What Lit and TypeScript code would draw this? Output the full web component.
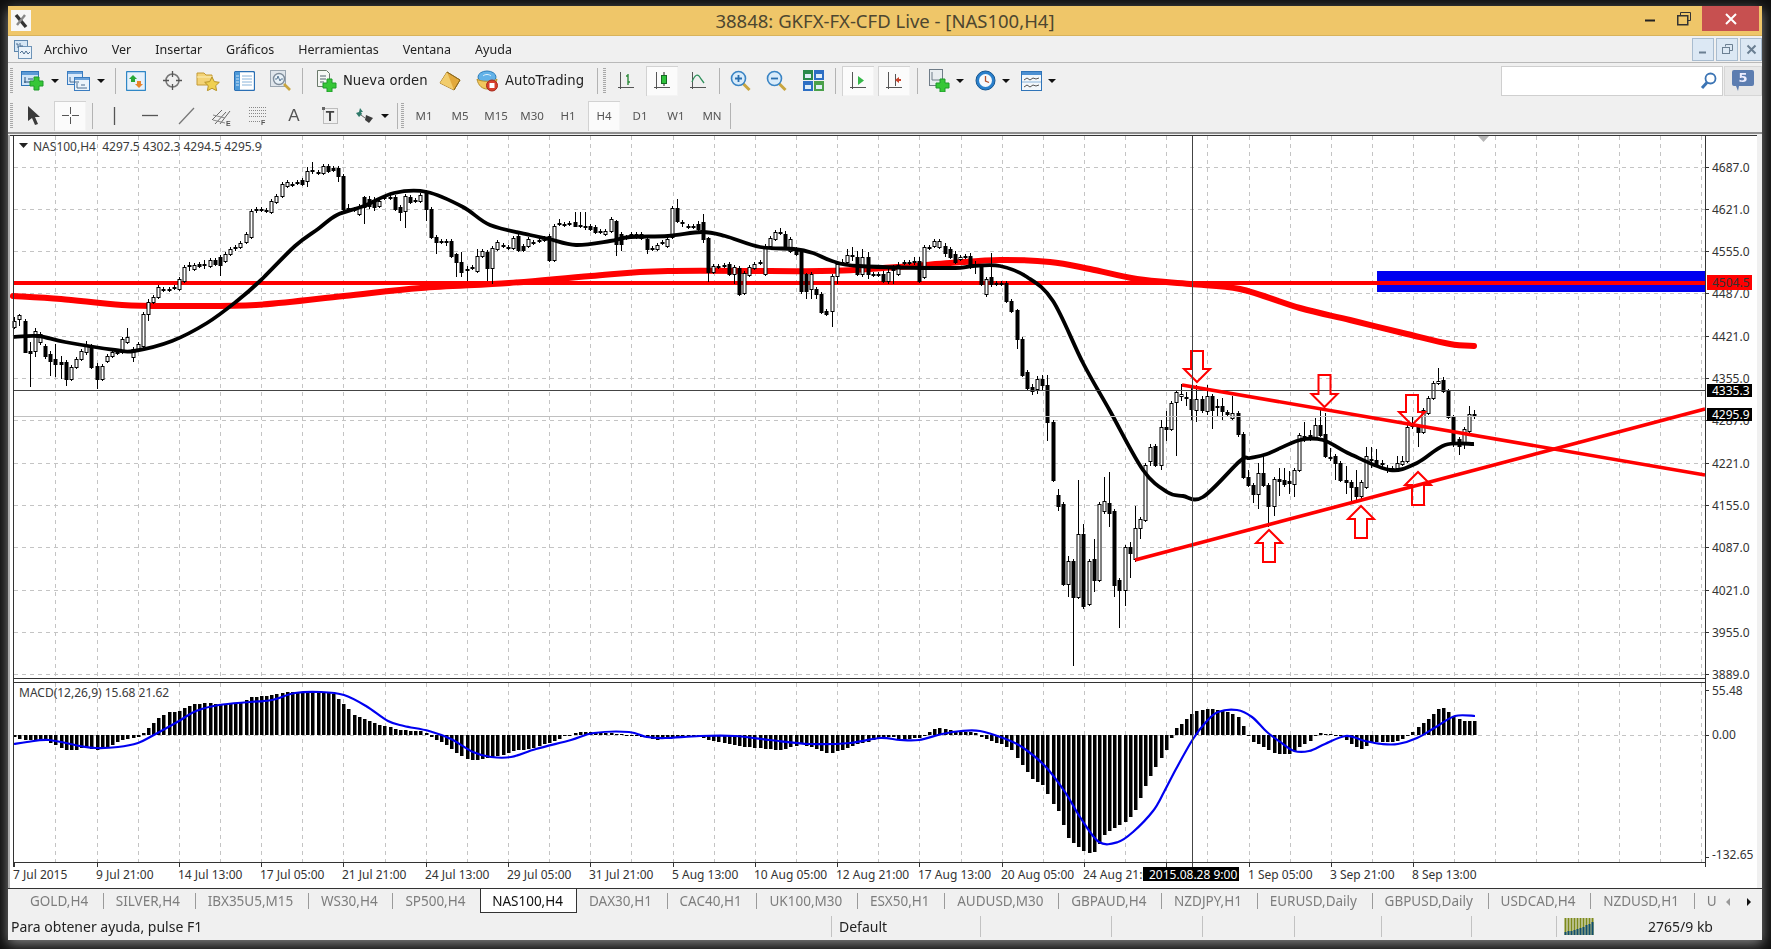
import {html, svg, css, LitElement} from 'lit';
import {customElement} from 'lit/decorators.js';

// pixel positions on the chart are page coordinates, the svg viewBox starts at the window corner
const barX = (i: number) => Math.round(14.3 + 5.14 * i) + 0.5;

// top, bottom, up, wick top, wick bottom
const BARS: number[][] = [
  [322,328,1,318,330],[316,320,1,315,327],[322,353,0,320,354],[352,354,0,343,388],[332,352,1,329,358],[335,343,1,333,346],[347,357,0,345,360],[355,362,0,352,377],[360,365,0,345,378],[363,365,0,357,380],
  [363,380,0,361,387],[368,380,1],[360,368,1],[352,360,1],[347,353,1,342,356],[347,368,0,345,370],[367,380,0,364,390],[367,380,1],[357,362,1],[353,357,1],
  [352,354,0],[340,353,1],[338,343,1,329,345],[350,358,1,348,363],[345,350,1],[315,347,1],[303,315,1,300,322],[298,303,1],[288,298,1],[290,291,0],
  [290,291,0],[288,289,0],[280,290,1],[268,282,1],[266,267,0,263,272],[266,270,1],[265,267,0],[265,266,0,261,270],[261,267,1],[261,265,0],
  [258,266,0,256,277],[255,262,1],[250,255,1],[248,249,0,246,252],[244,248,1],[235,243,1],[212,238,1],[210,211,0,208,214],[210,211,0],[211,212,0],
  [202,213,1],[197,203,1],[185,197,1],[183,187,1],[185,186,0],[183,184,0],[181,185,0],[172,182,1,168,188],[171,172,0,163,175],[173,174,0],
  [167,174,1],[167,172,0],[169,171,0],[169,177,0,167,183],[177,210,0],[209,210,0,205,212],[210,211,0],[208,215,1,205,217],[198,208,0,197,225],[200,207,0,197,210],
  [202,208,0,198,212],[202,207,1],[198,199,0],[198,199,0],[198,210,0,196,212],[208,213,0,206,222],[197,212,1,195,229],[198,203,0],[201,202,0],[196,202,1],
  [193,210,0,191,222],[210,238,0],[238,243,0,236,255],[242,243,0],[242,243,0,240,247],[242,257,0],[255,263,0,254,278],[263,273,0,253,278],[270,271,0,267,282],[268,269,0],
  [257,272,1,250,274],[252,257,1],[253,269,0,251,282],[249,269,1,247,285],[243,250,1],[246,247,0],[248,249,0],[239,249,1],[237,251,0],[247,251,0],
  [240,247,1],[243,244,0],[241,242,0],[239,241,1],[237,261,0],[227,261,1,225,263],[224,225,0,220,227],[225,226,0],[224,225,0],[223,227,0,213,228],
  [226,227,0,213,229],[227,228,0,213,231],[227,230,0],[228,233,0],[232,233,0],[232,235,1],[220,232,1],[222,245,0,221,257],[235,245,0,233,252],[238,239,0],
  [235,238,1],[235,236,0,233,240],[235,239,0],[240,250,0,238,255],[249,250,0],[246,250,1],[243,244,0],[240,247,1],[209,238,1],[209,222,0,200,224],
  [223,224,0,221,228],[227,228,0],[227,228,0],[225,230,0,222,232],[223,240,0,215,244],[239,273,0,238,283],[267,273,1],[267,268,0],[266,267,0],[265,275,0],
  [268,275,1,266,285],[269,295,0,267,297],[274,294,1],[268,276,1],[265,269,1],[263,264,0],[247,275,1],[239,247,1],[233,240,1],[233,234,0,229,236],
  [235,248,0,232,250],[240,252,1],[250,255,0],[253,292,0,252,295],[275,292,0,274,300],[275,290,1,273,300],[290,295,0,288,300],[295,313,0],[312,315,0],[277,312,1,275,328],
  [265,277,1,263,285],[263,264,0,260,266],[256,263,1,250,265],[256,257,0,248,262],[258,275,0,252,277],[258,275,1,250,278],[258,275,0,253,280],[275,276,0],[275,276,0],[275,282,0,272,284],
  [273,282,1,270,285],[270,271,0,266,285],[266,275,1,263,277],[263,264,0],[263,264,0],[262,263,0,258,266],[262,282,0,258,284],[248,278,1],[248,249,0],[242,247,1],
  [242,248,1],[247,254,0,244,258],[250,258,0],[255,263,0,252,265],[258,260,1],[257,258,0],[257,268,0,254,270],[266,267,0,262,275],[267,285,0],[280,295,1,278,298],
  [278,285,0,254,288],[284,285,0],[284,285,0],[284,302,0],[302,312,0],[311,340,0,310,350],[340,376,0],[373,389,0],[388,392,0,385,396],[380,390,1,377,395],
  [380,386,0,376,392],[386,423,0,376,442],[423,481,0],[496,507,0,490,512],[505,585,0],[562,585,1,557,598],[562,598,0,560,667],[535,598,1,481,600],[535,607,0,525,610],[562,605,1],
  [560,581,0,540,593],[505,581,1],[502,512,1,478,515],[504,514,0,473,528],[512,586,0,510,598],[581,591,0,579,629],[548,591,1,546,607],[548,554,0,543,579],[529,560,1,507,563],[520,529,1,518,540],
  [466,521,1],[448,462,1,445,467],[447,466,0],[428,466,1,421,471],[428,430,0,412,442],[404,430,1],[393,403,1,391,457],[395,397,1,385,402],[398,399,0,393,407],[400,410,0,386,421],
  [400,411,1,386,423],[400,411,0,397,414],[397,412,1,386,416],[397,411,0,395,430],[407,408,0,400,418],[407,412,0,399,421],[413,415,0],[414,419,1,397,421],[414,435,0,412,438],[435,478,0],
  [478,486,0,471,488],[486,495,0,484,504],[474,495,1,464,510],[474,486,0,457,488],[486,507,0,484,528],[480,507,1,478,517],[480,482,0,469,497],[481,485,0,469,488],[482,484,0,472,495],[471,485,1,469,498],
  [436,471,1],[437,438,0,423,443],[436,437,0,431,442],[426,438,1,419,440],[426,436,0,411,438],[435,457,0,414,459],[458,459,0,449,462],[457,464,0,455,481],[464,481,0],[481,483,0,467,495],
  [483,488,0,481,505],[488,497,0,471,502],[483,497,1,481,502],[457,488,1,448,490],[460,461,0,448,469],[461,466,0,450,468],[464,465,0,461,468],[469,470,0,466,474],[469,470,0],[464,469,1,457,471],
  [462,465,1,457,467],[428,462,1],[426,427,0,417,430],[428,433,0,426,448],[411,433,1,409,435],[399,414,1,397,416],[384,399,1],[382,384,1,369,386],[381,392,0,378,394],[392,418,0],
  [418,442,0,416,448],[440,447,0,438,456],[430,443,1,428,450],[415,432,1,407,434],[415,417,0,411,420],
];

const MA_BLACK = '13,338 38,337 65,343 115,351 134,352 172,342 207,324 237,302 260,282 295,247 318,230 337,216 364,207 394,194 427,193 463,208 490,226 530,236 549,240 576,246 610,242 630,238 668,237 702,233 725,237 760,248 794,250 813,254 832,262 859,267 950,269 973,267 1000,267 1027,278 1053,302 1083,364 1110,412 1143,471 1167,493 1183,497 1203,498 1240,462 1250,459 1267,455 1300,441 1323,441 1350,455 1390,471 1417,464 1445,446 1474,445';
const MA_RED = '13,297 61,300 122,306 176,307 256,306 344,297 421,289 509,284 591,277 668,272 821,272 897,268 950,264 1000,261 1050,263 1090,270 1137,280 1190,285 1240,290 1300,309 1350,321 1407,335 1450,345 1474,347';
const SIGNAL = '14,745 27,743 49,741 80,747 96,749 118,748 138,744 152,737 179,722 196,712 219,706 250,703 272,701 295,694 321,693 344,696 366,707 388,722 404,727 429,732 451,740 473,753 491,758 511,758 536,750 571,741 594,734 629,733 647,738 665,739 700,737 735,737 770,741 810,745 850,744 880,739 900,741 919,741 942,735 961,732 980,732 1003,739 1022,748 1045,767 1065,793 1080,818 1099,843 1118,843 1133,833 1153,812 1164,793 1176,770 1193,740 1206,723 1218,713 1237,711 1252,718 1267,733 1283,745 1294,752 1309,752 1325,745 1346,737 1365,742 1382,745 1398,745 1417,739 1436,728 1455,717 1475,717';

// histogram end points, x then y
const HIST: [number, number][] = [[14,738],[22,741],[33,741],[45,742],[58,747],[67,751],[76,751],[85,748],[96,751],[107,749],[118,743],[129,739],[138,738],[143,734],[152,725],[158,719],[170,713],[179,712],[188,707],[196,705],[210,704],[219,706],[228,705],[241,704],[252,698],[268,697],[286,693],[304,693],[321,693],[333,695],[344,705],[353,715],[362,719],[371,723],[379,726],[388,727],[397,730],[411,732],[424,732],[431,738],[442,743],[455,753],[467,760],[478,761],[487,759],[500,757],[514,752],[527,750],[540,747],[554,742],[563,738],[571,735],[580,733],[598,733],[612,734],[629,736],[643,738],[656,741],[665,740],[679,738],[696,737],[712,742],[745,748],[780,751],[802,745],[830,755],[858,745],[892,737],[900,741],[911,740],[923,738],[934,730],[942,729],[954,732],[973,733],[982,738],[992,742],[1003,746],[1013,752],[1022,765],[1032,780],[1042,785],[1051,802],[1059,813],[1068,838],[1078,848],[1087,854],[1095,853],[1105,835],[1114,829],[1126,823],[1135,812],[1145,788],[1154,770],[1162,758],[1168,749],[1172,738],[1177,728],[1185,722],[1193,713],[1202,711],[1210,709],[1220,712],[1229,713],[1239,718],[1246,732],[1252,742],[1262,747],[1271,753],[1281,755],[1290,755],[1300,748],[1310,742],[1319,734],[1331,735],[1340,737],[1352,745],[1361,750],[1369,745],[1378,743],[1390,743],[1401,741],[1409,735],[1419,728],[1428,720],[1438,710],[1445,709],[1453,717],[1463,722],[1476,722]];

const histY = (x: number) => {
  for (let k = 1; k < HIST.length; k++) {
    if (x <= HIST[k][0]) {
      const [x0, y0] = HIST[k - 1];
      const [x1, y1] = HIST[k];
      return y0 + ((y1 - y0) * (x - x0)) / (x1 - x0);
    }
  }
  return HIST[HIST.length - 1][1];
};

// catmull-rom through the traced points so the averages do not look polygonal
const smooth = (points: string) => {
  const p = points.split(' ').map(s => s.split(',').map(Number));
  let d = `M${p[0][0]} ${p[0][1]}`;
  for (let i = 0; i < p.length - 1; i++) {
    const a = p[i - 1] ?? p[i];
    const b = p[i];
    const c = p[i + 1];
    const e = p[i + 2] ?? c;
    d += `C${b[0] + (c[0] - a[0]) / 6} ${b[1] + (c[1] - a[1]) / 6} ${c[0] - (e[0] - b[0]) / 6} ${c[1] - (e[1] - b[1]) / 6} ${c[0]} ${c[1]}`;
  }
  return d;
};

const PRICES = ['4687.0','4621.0','4555.0','4487.0','4421.0','4355.0','4287.0','4221.0','4155.0','4087.0','4021.0','3955.0','3889.0'];
const TIMES = ['7 Jul 2015','9 Jul 21:00','14 Jul 13:00','17 Jul 05:00','21 Jul 21:00','24 Jul 13:00','29 Jul 05:00','31 Jul 21:00','5 Aug 13:00','10 Aug 05:00','12 Aug 21:00','17 Aug 13:00','20 Aug 05:00','24 Aug 21:00','','1 Sep 05:00','3 Sep 21:00','8 Sep 13:00'];
const TABS = ['GOLD,H4','SILVER,H4','IBX35U5,M15','WS30,H4','SP500,H4','NAS100,H4','DAX30,H1','CAC40,H1','UK100,M30','ESX50,H1','AUDUSD,M30','GBPAUD,H4','NZDJPY,H1','EURUSD,Daily','GBPUSD,Daily','USDCAD,H4','NZDUSD,H1','U'];
const MENU = ['Archivo','Ver','Insertar','Gráficos','Herramientas','Ventana','Ayuda'];
const PERIODS = ['M1','M5','M15','M30','H1','H4','D1','W1','MN'];

const I = {
  logo: html`<svg width="20" height="21" viewBox="0 0 20 21"><rect width="20" height="21" fill="#f7f7f7"/><path d="M5 5l10 12" stroke="#333" stroke-width="3.4"/><path d="M14 5L6 15" stroke="#888" stroke-width="2.4"/></svg>`,
  mdi: html`<svg width="18" height="19" viewBox="0 0 18 19"><rect x=".5" y=".5" width="13" height="11" fill="#d5e6f5" stroke="#5f87ad"/><rect x="4.5" y="6.5" width="13" height="12" fill="#e9f2fa" stroke="#6e94b8"/><path d="M2 4h2v4M6 3v3h3M6 13l2-2 2 3 2-3 2 3 2-2" fill="none" stroke="#4a6d90"/></svg>`,
  newChart: html`<svg width="24" height="21" viewBox="0 0 24 21"><rect x=".5" y="1.5" width="17" height="14" fill="#cfe4f7" stroke="#2f74b8"/><rect x="1" y="2" width="16" height="3" fill="#5c9ad6"/><path d="M4 7v6M3 12h11M7 9h5" stroke="#27507c" fill="none"/><path d="M13 7h5v4h4v5h-4v4h-5v-4H9v-5h4z" fill="#36c736" stroke="#1f9a2a"/></svg>`,
  profiles: html`<svg width="24" height="20" viewBox="0 0 24 20"><rect x=".5" y=".5" width="15" height="13" fill="#dbeafa" stroke="#3a7cc0"/><rect x="1" y="1" width="14" height="2" fill="#6ba2da"/><rect x="7.5" y="6.5" width="15" height="13" fill="#eaf3fb" stroke="#3a7cc0"/><rect x="8" y="7" width="14" height="2" fill="#6ba2da"/><path d="M3 6v5h9M10 12v5h10M14 14h4" stroke="#4a6d90" fill="none"/></svg>`,
  market: html`<svg width="20" height="20" viewBox="0 0 20 20"><rect x=".5" y=".5" width="19" height="19" rx="1" fill="#e6f1fb" stroke="#2f87c6" stroke-width="1.4"/><path d="M6 3l4 4H8v3H4V7H2z" transform="translate(1 1)" fill="#27a838"/><path d="M11 10h4v3h2l-4 4-4-4h2z" fill="#e8842c"/></svg>`,
  target: html`<svg width="21" height="21" viewBox="0 0 21 21" fill="none" stroke="#777"><circle cx="10.5" cy="10.5" r="6.5" stroke-width="1.6"/><path d="M10.5 1v6M10.5 14v6M1 10.5h6M14 10.5h6" stroke="#555" stroke-width="1.3"/></svg>`,
  favorites: html`<svg width="24" height="21" viewBox="0 0 24 21"><path d="M1 3h7l2 2h6v10H1z" fill="#f3d377" stroke="#c49a34"/><path d="M1 7h15" stroke="#fbeeb8"/><path d="M16 7l2.3 4.6 5 .7-3.6 3.4.9 5-4.6-2.4-4.6 2.4.9-5-3.6-3.4 5-.7z" fill="#f0d050" stroke="#b79328"/></svg>`,
  navigator: html`<svg width="21" height="20" viewBox="0 0 21 20"><rect x=".5" y=".5" width="20" height="19" rx="1.5" fill="#fff" stroke="#2a6fb4" stroke-width="1.3"/><rect x="1" y="1" width="5" height="18" fill="#4e9ad8"/><path d="M8 5h10M8 8h10M8 11h10M8 14h10" stroke="#8ab4da"/><path d="M2 5h3M2 8h3M2 11h3M2 14h3" stroke="#cfe4f7"/></svg>`,
  tester: html`<svg width="23" height="22" viewBox="0 0 23 22"><rect x="1.5" y=".5" width="15" height="16" fill="#dfe5eb" stroke="#9aa5b0"/><circle cx="10" cy="9" r="5.5" fill="#e8f1f8" stroke="#7e8c9a" stroke-width="1.4"/><path d="M6 9h2l1-3 2 5 1-2h2" stroke="#5c7a96" fill="none"/><path d="M15 14l6 6" stroke="#c9a53f" stroke-width="2.6"/></svg>`,
  order: html`<svg width="21" height="22" viewBox="0 0 21 22"><path d="M1.5.5h9l3 3v13h-12z" fill="#f6f8f5" stroke="#6b7a6b"/><path d="M4 6h6M4 9h6M4 12h4" stroke="#50606a"/><path d="M11 9h5v4h4v5h-4v4h-5v-4H7v-5h4z" fill="#36c736" stroke="#1f9a2a"/></svg>`,
  gold: html`<svg width="22" height="20" viewBox="0 0 22 20"><path d="M8 1l13 8-6 10L1 12z" fill="#e2a93c" stroke="#9b7021"/><path d="M8 1l7 18L1 12z" fill="#f2cd6d"/><path d="M8 1l13 8-6 10" fill="none" stroke="#8d6a1c"/></svg>`,
  auto: html`<svg width="23" height="22" viewBox="0 0 23 22"><ellipse cx="11" cy="7" rx="9" ry="6" fill="#62b2e8" stroke="#2a7bb8"/><path d="M1 9c1 7 6 10 10 10s9-3 10-10c-3 3-17 3-20 0z" fill="#f2c75d" stroke="#b48e2c"/><path d="M7 6c2-2 6-2 8 0" stroke="#dff1fc" fill="none"/><circle cx="16" cy="15.5" r="5.5" fill="#d8402c" stroke="#a52a1c"/><rect x="13.5" y="13" width="5" height="5" fill="#fff"/></svg>`,
  bars: html`<svg width="18" height="19" viewBox="0 0 18 19" fill="none"><path d="M3.5 1v17M1 16.5h16" stroke="#555"/><path d="M11 3v11M9 5h2M11 11h2" stroke="#2c8a3a" stroke-width="1.4"/></svg>`,
  candles: html`<svg width="18" height="19" viewBox="0 0 18 19" fill="none"><path d="M3.5 1v17M1 16.5h16" stroke="#555"/><path d="M11 1v14" stroke="#222"/><rect x="8.5" y="4.5" width="5" height="8" fill="#2ec23c" stroke="#166b22"/></svg>`,
  line: html`<svg width="18" height="19" viewBox="0 0 18 19" fill="none"><path d="M3.5 1v17M1 16.5h16" stroke="#555"/><path d="M3 11c3-8 6-9 9-3l3 4" stroke="#2d8f5a" stroke-width="1.3"/></svg>`,
  zoomIn: html`<svg width="22" height="22" viewBox="0 0 22 22"><path d="M12.5 13l7 7" stroke="#c9a53f" stroke-width="3"/><circle cx="8.5" cy="8.5" r="7" fill="#d8ebfa" stroke="#3a84c4" stroke-width="1.6"/><path d="M5 8.5h7M8.5 5v7" stroke="#2b6fae" stroke-width="1.8"/></svg>`,
  zoomOut: html`<svg width="22" height="22" viewBox="0 0 22 22"><path d="M12.5 13l7 7" stroke="#c9a53f" stroke-width="3"/><circle cx="8.5" cy="8.5" r="7" fill="#d8ebfa" stroke="#3a84c4" stroke-width="1.6"/><path d="M5 8.5h7" stroke="#2b6fae" stroke-width="1.8"/></svg>`,
  tile: html`<svg width="21" height="21" viewBox="0 0 21 21"><rect width="10" height="10" fill="#2a8a4a"/><rect x="11" width="10" height="10" fill="#2d6fc4"/><rect y="11" width="10" height="10" fill="#2d6fc4"/><rect x="11" y="11" width="10" height="10" fill="#4aa04a"/><path d="M2 4h6v4H2zM13 4h6v4h-6zM2 15h6v4H2zM13 15h6v4h-6z" fill="#dfeef8"/></svg>`,
  scroll: html`<svg width="18" height="19" viewBox="0 0 18 19" fill="none"><path d="M3.5 1v17M1 16.5h16" stroke="#555"/><path d="M9 5l6 4.5L9 14z" fill="#36b84a"/></svg>`,
  shift: html`<svg width="18" height="19" viewBox="0 0 18 19" fill="none"><path d="M3.5 1v17M1 16.5h16M10.5 3v12" stroke="#555"/><path d="M10 9l4-3v2h2v2h-2v2z" fill="#c8432c"/></svg>`,
  indicator: html`<svg width="21" height="23" viewBox="0 0 21 23"><rect x=".5" y=".5" width="13" height="16" fill="#e9edf0" stroke="#6f7c88"/><path d="M3 3v8h8" stroke="#6f7c88" fill="none"/><path d="M11 10h5v4h4v5h-4v4h-5v-4H7v-5h4z" fill="#36c736" stroke="#1f9a2a"/></svg>`,
  clock: html`<svg width="21" height="21" viewBox="0 0 21 21"><circle cx="10.5" cy="10.5" r="9.5" fill="#2a80cc" stroke="#14548e"/><circle cx="10.5" cy="10.5" r="6.5" fill="#f6f9fc"/><path d="M10.5 6v5l3.5 1.5" stroke="#b5502a" fill="none" stroke-width="1.3"/></svg>`,
  template: html`<svg width="21" height="20" viewBox="0 0 21 20"><rect x=".5" y=".5" width="20" height="19" fill="#f2f7fb" stroke="#2f74b8"/><rect x="1" y="1" width="19" height="3" fill="#4c90d2"/><path d="M1 11h19" stroke="#8ab4da"/><path d="M3 9l3-2 3 2 3-2 3 1 3-1M3 16l3-2 3 2 3-2 3 1 3-1" stroke="#555" fill="none"/></svg>`,
  cursor: html`<svg width="14" height="19" viewBox="0 0 14 19"><path d="M1 0l12 11H8l3 7-3 1-3-7-4 3z" fill="#3a3a3a"/></svg>`,
  cross: html`<svg width="19" height="19" viewBox="0 0 19 19"><path d="M9.5 1v7M9.5 11v7M1 9.5h7M11 9.5h7" stroke="#555"/></svg>`,
  vline: html`<svg width="3" height="18" viewBox="0 0 3 18"><path d="M1.5 0v18" stroke="#555" stroke-width="1.3"/></svg>`,
  hline: html`<svg width="16" height="3" viewBox="0 0 16 3"><path d="M0 1.5h16" stroke="#555" stroke-width="1.3"/></svg>`,
  trend: html`<svg width="17" height="18" viewBox="0 0 17 18"><path d="M1 17L16 1" stroke="#777" stroke-width="1.2"/></svg>`,
  channel: html`<svg width="22" height="20" viewBox="0 0 22 20" fill="none"><path d="M1 14L11 4M4 18L15 6M9 18L19 5" stroke="#666"/><path d="M2 9l12 3M2 14l12 3" stroke="#888"/><text x="15" y="20" font-size="7" font-weight="700" fill="#555" font-family="Liberation Sans, sans-serif">E</text></svg>`,
  fibo: html`<svg width="18" height="19" viewBox="0 0 18 19" fill="none"><path d="M0 1.5h17M0 4.5h17M0 7.5h17M0 10.5h17M0 15.5h12" stroke="#888" stroke-dasharray="1 1"/><text x="12" y="19" font-size="7" font-weight="700" fill="#555" font-family="Liberation Sans, sans-serif">F</text></svg>`,
  label: html`<svg width="17" height="18" viewBox="0 0 17 18" fill="none"><rect x="1.5" y="1.5" width="14" height="15" stroke="#888" stroke-dasharray="1 1"/><rect x="0" y="0" width="3" height="3" fill="#666"/></svg>`,
  arrows: html`<svg width="20" height="18" viewBox="0 0 20 18"><path d="M5 1l3 4H6l1 2-3 3-3-4 3-1z" fill="#2f7a6a"/><path d="M11 8l7 3-4 5-4-3z" fill="#3c3c3c"/><path d="M6 8l4 3" stroke="#666"/></svg>`,
  lens: html`<svg width="17" height="18" viewBox="0 0 17 18"><circle cx="10.5" cy="6.5" r="5" fill="#fff" stroke="#3b74b4" stroke-width="1.8"/><path d="M7 10.5L2 16" stroke="#3b74b4" stroke-width="3"/></svg>`,
  five: html`<svg width="22" height="22" viewBox="0 0 22 22"><path d="M2 0h18a2 2 0 0 1 2 2v12a2 2 0 0 1-2 2H7l-1 5-2-5H2a2 2 0 0 1-2-2V2a2 2 0 0 1 2-2z" fill="#5c7db0"/></svg>`,
  conn: html`<svg width="31" height="17" viewBox="0 0 31 17"><path d="M1.5 0v17M4.5 0v17M7.5 0v17M10.5 0v17M13.5 0v17M16.5 0v17M19.5 0v17M22.5 0v17M25.5 0v17M28.5 0v17" stroke="#7d8a1a" stroke-width="2"/><path d="M1.5 17v-3M4.5 17v-4M7.5 17v-4M10.5 17v-5M13.5 17v-6M16.5 17v-7M19.5 17v-8M22.5 17v-10M25.5 17v-11M28.5 17v-13" stroke="#114e6e" stroke-width="2"/></svg>`,
};

@customElement('app-root')
export class AppRoot extends LitElement {
  static styles = css`
    :host {
      display: block;
      width: 1771px;
      height: 949px;
      overflow: hidden;
      background: #0f0f0f;
      font-family: "Noto Sans", "Liberation Sans", sans-serif;
      font-size: 12.5px;
      color: #222;
    }

    .window {
      margin: 6px 9px 0 8px;
      width: 1754px;
      height: 934px;
      display: flex;
      flex-direction: column;
      background: #f0f0f0;
      box-shadow: 0 4px 12px rgba(170,170,170,.75);
      filter: blur(.55px);
    }

    /* title bar */
    .title {
      height: 30px;
      flex: none;
      display: grid;
      grid-template-columns: 1fr auto 1fr;
      align-items: center;
      background: #efc669;
      border-bottom: 1px solid #d8b35c;
      box-sizing: border-box;
    }
    .title-text {
      font-size: 18.5px;
      color: #4d4630;
    }
    .logo {
      display: flex;
      padding-left: 3px;
    }
    .controls {
      justify-self: end;
      display: flex;
      align-self: start;
      align-items: stretch;
      height: 25px;
      padding-right: 3px;
    }
    .ctl {
      display: flex;
      align-items: center;
      justify-content: center;
      width: 34px;
    }
    .close {
      width: 57px;
      margin-left: 1px;
      background: #c75050;
    }

    /* menu */
    .menu {
      height: 27px;
      flex: none;
      box-sizing: border-box;
      display: flex;
      align-items: center;
      border-bottom: 1px solid #b9b9b9;
      padding-left: 6px;
      gap: 24px;
    }
    .menu-icon {
      display: flex;
      margin-right: -12px;
    }
    .mdi {
      margin-left: auto;
      display: flex;
      gap: 2px;
    }
    .mdi-btn {
      width: 22px;
      height: 23px;
      box-sizing: border-box;
      border: 1px solid #a9bccf;
      background: #dce8f4;
      display: flex;
      align-items: center;
      justify-content: center;
    }

    /* toolbars */
    .bar {
      height: 35px;
      flex: none;
      display: flex;
      align-items: center;
      box-sizing: border-box;
    }
    .bar.second {
      height: 36px;
      padding-top: 1px;
      border-bottom: 2px solid #8f8f8f;
    }
    .group {
      height: 100%;
      box-sizing: border-box;
      display: flex;
      align-items: center;
      padding-left: 2px;
      padding-right: 4px;
    }
    .bar:first-of-type .group {
      border-right: 2px solid #c8c8c8;
      border-bottom: 2px solid #c8c8c8;
    }
    .grip {
      width: 3px;
      height: 25px;
      flex: none;
      background: repeating-linear-gradient(#a8a8a8 0 1px, transparent 1px 2px);
    }
    .btn {
      width: 36px;
      height: 30px;
      flex: none;
      display: flex;
      align-items: center;
      justify-content: center;
      box-sizing: border-box;
    }
    .btn.drop {
      width: 46px;
      justify-content: flex-start;
      padding-left: 7px;
      gap: 6px;
    }
    .btn.on {
      width: 32px;
      margin: 0 2px;
      background: #fbfbfb;
      box-shadow: inset 1px 1px 0 #d2d2d2, inset -1px -1px 0 #f4f4f4;
    }
    .btn.wide {
      width: 124px;
      justify-content: flex-start;
      padding-left: 8px;
      gap: 6px;
      font-family: "DejaVu Sans", sans-serif;
      font-size: 13.2px;
    }
    .caret {
      width: 0;
      height: 0;
      border: 4px solid transparent;
      border-top-color: #111;
      border-bottom: 0;
    }
    .sep {
      width: 1px;
      height: 26px;
      flex: none;
      background: #b3b3b3;
    }
    .l3 { margin-left: 3px; }
    .l4 { margin-left: 4px; }
    .l5 { margin-left: 5px; }
    .l9 { margin-left: 9px; }
    .r1 { margin-right: 1px; }
    .r2 { margin-right: 2px; }
    .r3 { margin-right: 3px; }
    .r4 { margin-right: 4px; }
    .r5 { margin-right: 5px; }
    .tf {
      font-size: 11.5px;
      color: #555;
    }
    .glyph-a {
      font-size: 17px;
      color: #555;
      font-family: "Liberation Sans", sans-serif;
    }
    .t-box {
      display: grid;
      place-items: center;
      font-size: 14px;
      font-weight: 700;
      color: #444;
      font-family: "Liberation Sans", sans-serif;
    }
    .t-box > * {
      grid-area: 1 / 1;
    }
    .search {
      margin-left: auto;
      width: 222px;
      height: 30px;
      box-sizing: border-box;
      background: #fff;
      border: 1px solid #cfcfcf;
      display: flex;
      align-items: center;
      justify-content: flex-end;
      padding-right: 5px;
    }
    .msg {
      width: 38px;
      height: 30px;
      margin-left: 1px;
      box-sizing: border-box;
      background: #e8e8e8;
      border: 1px solid #d6d6d6;
      display: grid;
      place-items: center;
    }
    .msg > * {
      grid-area: 1 / 1;
    }
    .msg b {
      color: #eef;
      font-size: 13px;
      margin-bottom: 6px;
      font-family: "DejaVu Sans", sans-serif;
    }
    .gap {
      height: 1px;
      flex: none;
    }

    /* chart */
    svg.chart {
      display: block;
      flex: none;
    }
    .axis {
      font: 12px "Noto Sans", sans-serif;
      fill: #333;
    }
    .legend {
      font: 12px "Noto Sans", sans-serif;
      fill: #3a3a3a;
    }
    .tag {
      font: 12px "Noto Sans", sans-serif;
      fill: #fff;
    }

    /* tabs */
    .tabs {
      height: 26px;
      flex: none;
      box-sizing: border-box;
      display: flex;
      align-items: stretch;
      border-top: 1px solid #333;
      font-size: 13.5px;
      color: #7d7d7d;
      padding-left: 10px;
      overflow: hidden;
    }
    .tab-list {
      display: flex;
      align-items: center;
      width: 1704px;
      flex: none;
      overflow: hidden;
      height: 24px;
    }
    .tab {
      flex: none;
      padding: 0 14.7px 0 12px;
      white-space: nowrap;
    }
    .tab-sep {
      flex: none;
      width: 1px;
      height: 16px;
      background: #9a9a9a;
    }
    .tab.on {
      height: 100%;
      display: flex;
      align-items: center;
      box-sizing: border-box;
      background: #fff;
      color: #111;
      padding: 0 13px 0 11px;
      border: 1px solid #333;
      border-top: 0;
    }
    .arrows {
      flex: none;
      display: flex;
      align-items: center;
      gap: 17px;
      padding-left: 4px;
    }
    .tri-l, .tri-r {
      width: 0;
      height: 0;
      border: 4px solid transparent;
    }
    .tri-l { border-right-color: #999; border-left: 0; }
    .tri-r { border-left-color: #111; border-right: 0; }

    /* status bar */
    .status {
      height: 25px;
      flex: none;
      display: grid;
      grid-template-columns: 823px 149px 131px 91px 92px 87px 90px 85px 1fr;
      align-items: center;
      font-size: 14px;
    }
    .cell {
      height: 21px;
      box-sizing: border-box;
      padding-left: 7px;
      display: flex;
      align-items: center;
      white-space: nowrap;
      border-left: 1px solid #c2c2c2;
    }
    .cell:first-child {
      border-left: 0;
      padding-left: 3px;
    }
    .conn {
      gap: 53px;
    }
  `;

  private renderChart() {
    const gridX: number[] = [];
    for (let k = 0; k <= 41; k++) gridX.push(Math.round(14.3 + 41.14 * k) + 0.5);
    const gridY = PRICES.map((_, k) => Math.round(167.5 + 42.3 * k) + 0.5);

    return html`<svg class="chart" width="1754" height="753" viewBox="8 136 1754 753">
      <rect x="8" y="136" width="1754" height="753" fill="#fff"/>
      <rect x="8" y="136" width="2" height="753" fill="#aaa"/>
      <rect x="1757" y="136" width="5" height="753" fill="#f0f0f0"/>

      <g stroke="#c4c4c4" stroke-dasharray="4 4">
        ${gridX.slice(1).map(x => svg`<path d="M${x} 137V679M${x} 684V863"/>`)}
        ${gridY.map(y => svg`<path d="M14 ${y}H1705"/>`)}
        <path d="M14 736.5H1705"/>
      </g>

      <rect x="1377" y="272" width="328" height="21" fill="#0000f0"/>
      <rect x="13" y="282" width="1692" height="4" fill="#ff0000"/>
      <path d=${smooth(MA_RED)} fill="none" stroke="#f00" stroke-width="6" stroke-linecap="round"/>

      ${BARS.map((b, i) => {
        const x = barX(i);
        const wt = b[3] ?? b[0] - 2;
        const wb = b[4] ?? b[1] + 2;
        return svg`<path d="M${x} ${wt}V${wb}" stroke="#000"/>
          <rect x=${x - 1.5} y=${b[0] + 0.5} width="3" height=${Math.max(b[1] - b[0], 1)} fill=${b[2] ? '#fff' : '#000'} stroke="#000"/>`;
      })}

      <path d=${smooth(MA_BLACK)} fill="none" stroke="#000" stroke-width="3.8"/>

      <path d="M13 417.5H1705" stroke="#c0c0c0"/>
      <path d="M13 391.5H1705" stroke="#444"/>

      <g stroke="#f00" stroke-width="3.6">
        <path d="M1135 561L1705 410"/>
        <path d="M1182 386L1705 476"/>
      </g>
      <g fill="none" stroke="#f00" stroke-width="2">
        ${[[1197, 352, 383], [1324.5, 376, 408], [1412, 396, 426]].map(([c, t, b]) => svg`<path d="M${c - 6} ${t}H${c + 6}V${b - 13}H${c + 13}L${c} ${b}L${c - 13} ${b - 13}H${c - 6}Z"/>`)}
        ${[[1269, 531, 563], [1361, 507, 539], [1418, 473, 506]].map(([c, t, b]) => svg`<path d="M${c - 6} ${b}H${c + 6}V${t + 13}H${c + 13}L${c} ${t}L${c - 13} ${t + 13}H${c - 6}Z"/>`)}
      </g>

      <!-- macd pane -->
      ${BARS.map((_, i) => {
        const x = barX(i);
        const y = Math.round(histY(x));
        const up = y < 736;
        return svg`<rect x=${x - 1.5} y=${up ? y : 736} width="3.5" height=${Math.max(Math.abs(y - 736), 1)} fill="#000"/>`;
      })}
      <path d=${smooth(SIGNAL)} fill="none" stroke="#0000f0" stroke-width="2.2"/>

      <path d="M1192.5 136V868" stroke="#444"/>

      <!-- frames -->
      <g stroke="#333" fill="none">
        <path d="M10 136.5H1757"/>
        <path d="M13.5 136V868"/>
        <path d="M1705.5 136V868"/>
        <path d="M13 679.5H1705M13 683.5H1705"/>
        <path d="M13 863.5H1705"/>
        ${TIMES.map((_, k) => svg`<path d="M${Math.round(14.3 + 82.28 * k) + 0.5} 863V868"/>`)}
        ${gridY.map(y => svg`<path d="M1705 ${y}h4"/>`)}
        <path d="M1705 736.5h4M1705 691.5h4M1705 858.5h4"/>
      </g>

      <path d="M1478 137h11l-5.500 6z" fill="#b5b5b5"/>

      <path d="M19 144h9l-4.500 5z" fill="#222"/>
      <text class="legend" x="33" y="151.500" xml:space="preserve">NAS100,H4  4297.5 4302.3 4294.5 4295.9</text>
      <text class="legend" x="19" y="698">MACD(12,26,9) 15.68 21.62</text>

      ${PRICES.map((p, k) => svg`<text class="axis" x="1712" y=${gridY[k] + 4}>${p}</text>`)}
      <text class="axis" x="1712" y="695.500">55.48</text>
      <text class="axis" x="1712" y="740">0.00</text>
      <text class="axis" x="1712" y="860">-132.65</text>

      <rect x="1707" y="276" width="45" height="15" fill="#f00"/>
      <text class="axis" x="1712" y="288">4504.5</text>
      <rect x="1707" y="385" width="45" height="13" fill="#000"/>
      <text class="tag" x="1712" y="395.500">4335.3</text>
      <rect x="1707" y="409" width="45" height="13" fill="#000"/>
      <text class="tag" x="1712" y="419.500">4295.9</text>

      ${TIMES.map((t, k) => svg`<text class="axis" x=${Math.round(14.3 + 82.28 * k) - 1} y="879.500">${t}</text>`)}
      <rect x="1143" y="868" width="96" height="14" fill="#000"/>
      <text class="tag" x="1149" y="879.500">2015.08.28 9:00</text>
    </svg>`;
  }

  render() {
    return html`<div class="window">
      <div class="title">
        <div class="logo">${I.logo}</div>
        <div class="title-text">38848: GKFX-FX-CFD Live - [NAS100,H4]</div>
        <div class="controls">
          <div class="ctl"><svg width="11" height="11" viewBox="0 0 11 11"><path d="M0 7.500h10" stroke="#222" stroke-width="2"/></svg></div>
          <div class="ctl"><svg width="14" height="14" viewBox="0 0 14 14" fill="none" stroke="#333"><path d="M3.500 3V.5h10v8H11"/><rect x=".75" y="3.750" width="10" height="9" stroke-width="1.500"/></svg></div>
          <div class="ctl close"><svg width="12" height="12" viewBox="0 0 12 12"><path d="M1 1l10 10M11 1L1 11" stroke="#fff" stroke-width="2"/></svg></div>
        </div>
      </div>

      <div class="menu">
        <div class="menu-icon">${I.mdi}</div>
        ${MENU.map(m => html`<span>${m}</span>`)}
        <div class="mdi">
          <div class="mdi-btn"><svg width="10" height="10" viewBox="0 0 10 10"><path d="M1 8.500h7" stroke="#6b7f92" stroke-width="2"/></svg></div>
          <div class="mdi-btn"><svg width="11" height="11" viewBox="0 0 11 11" fill="none" stroke="#6b7f92"><path d="M3.500 2.500V.5h7v6H8"/><rect x=".5" y="3.500" width="7" height="6"/></svg></div>
          <div class="mdi-btn"><svg width="11" height="11" viewBox="0 0 11 11"><path d="M1.500 1.500l8 8M9.500 1.500l-8 8" stroke="#6b7f92" stroke-width="2"/></svg></div>
        </div>
      </div>

      <div class="bar">
        <div class="group">
          <span class="grip r1"></span>
          <div class="btn drop">${I.newChart}<span class="caret"></span></div>
          <div class="btn drop">${I.profiles}<span class="caret"></span></div>
          <span class="sep l9 r2"></span>
          <div class="btn">${I.market}</div>
          <div class="btn">${I.target}</div>
          <div class="btn">${I.favorites}</div>
          <div class="btn">${I.navigator}</div>
          <div class="btn">${I.tester}</div>
          <span class="sep l4 r5"></span>
          <div class="btn wide">${I.order}<span>Nueva orden</span></div>
          <div class="btn">${I.gold}</div>
          <div class="btn wide">${I.auto}<span>AutoTrading</span></div>
          <span class="sep l5"></span>
          <span class="grip l5 r2"></span>
          <div class="btn">${I.bars}</div>
          <div class="btn on">${I.candles}</div>
          <div class="btn">${I.line}</div>
          <span class="sep l3 r3"></span>
          <div class="btn">${I.zoomIn}</div>
          <div class="btn">${I.zoomOut}</div>
          <div class="btn">${I.tile}</div>
          <span class="sep l4 r4"></span>
          <div class="btn on">${I.scroll}</div>
          <div class="btn on">${I.shift}</div>
          <span class="sep l5 r4"></span>
          <div class="btn drop">${I.indicator}<span class="caret"></span></div>
          <div class="btn drop">${I.clock}<span class="caret"></span></div>
          <div class="btn drop">${I.template}<span class="caret"></span></div>
        </div>
        <div class="search">${I.lens}</div>
        <div class="msg">${I.five}<b>5</b></div>
      </div>

      <div class="bar second">
        <div class="group">
          <span class="grip r3"></span>
          <div class="btn">${I.cursor}</div>
          <div class="btn on">${I.cross}</div>
          <span class="sep l4 r3"></span>
          <div class="btn">${I.vline}</div>
          <div class="btn">${I.hline}</div>
          <div class="btn">${I.trend}</div>
          <div class="btn">${I.channel}</div>
          <div class="btn">${I.fibo}</div>
          <div class="btn glyph-a">A</div>
          <div class="btn t-box">${I.label}<span>T</span></div>
          <div class="btn drop">${I.arrows}<span class="caret"></span></div>
          <span class="sep l3 r3"></span>
          <span class="grip r2"></span>
          ${PERIODS.map(p => html`<div class="btn tf ${p === 'H4' ? 'on' : ''}">${p}</div>`)}
          <span class="sep"></span>
        </div>
      </div>
      <div class="gap"></div>

      ${this.renderChart()}

      <div class="tabs">
        <div class="tab-list">
          ${TABS.map((t, i) => html`<div class="tab ${i === 5 ? 'on' : ''}">${t}</div>${i === 4 || i === 5 || i === TABS.length - 1 ? '' : html`<span class="tab-sep"></span>`}`)}
        </div>
        <div class="arrows"><span class="tri-l"></span><span class="tri-r"></span></div>
      </div>

      <div class="status">
        <div class="cell">Para obtener ayuda, pulse F1</div>
        <div class="cell">Default</div>
        <div class="cell"></div>
        <div class="cell"></div>
        <div class="cell"></div>
        <div class="cell"></div>
        <div class="cell"></div>
        <div class="cell"></div>
        <div class="cell conn">${I.conn}<span>2765/9 kb</span></div>
      </div>
    </div>`;
  }
}
